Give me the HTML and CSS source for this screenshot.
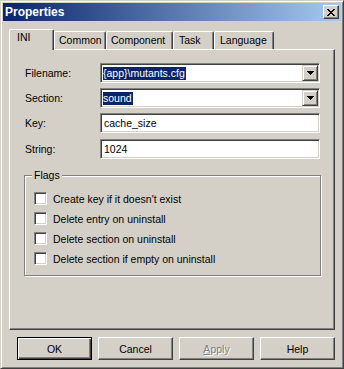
FILE: index.html
```html
<!DOCTYPE html>
<html lang="en">
<head>
    <meta charset="UTF-8">
    <title>Properties</title>
    <link rel="stylesheet" href="styles.css">
</head>
<body>
    <div class="window">
        <div class="titlebar">
            <span class="title">Properties</span>
            <div class="close">
                <svg width="8" height="7" viewBox="0 0 8 7" shape-rendering="crispEdges">
                    <path fill="#000" d="M0 0h2v1H0zM6 0h2v1H6zM1 1h2v1H1zM5 1h2v1H5zM2 2h4v1H2zM3 3h2v1H3zM2 4h4v1H2zM1 5h2v1H1zM5 5h2v1H5zM0 6h2v1H0zM6 6h2v1H6z"/>
                </svg>
            </div>
        </div>
        <div class="content">
            <div class="tabs">
                <div class="tab active tab-ini">INI</div>
                <div class="tab tab-common">Common</div>
                <div class="tab tab-component">Component</div>
                <div class="tab tab-task">Task</div>
                <div class="tab tab-language">Language</div>
            </div>
            <div class="panel">
                <div class="fields">
                    <label>Filename:</label>
                    <div class="field combo">
                        <span class="value"><span class="selected">{app}\mutants.cfg</span></span>
                        <span class="drop">
                            <svg width="7" height="4" viewBox="0 0 7 4" shape-rendering="crispEdges">
                                <path fill="#000" d="M0 0h7v1H0zM1 1h5v1H1zM2 2h3v1H2zM3 3h1v1H3z"/>
                            </svg>
                        </span>
                    </div>
                    <label>Section:</label>
                    <div class="field combo">
                        <span class="value"><span class="selected">sound</span></span>
                        <span class="drop">
                            <svg width="7" height="4" viewBox="0 0 7 4" shape-rendering="crispEdges">
                                <path fill="#000" d="M0 0h7v1H0zM1 1h5v1H1zM2 2h3v1H2zM3 3h1v1H3z"/>
                            </svg>
                        </span>
                    </div>
                    <label>Key:</label>
                    <div class="field"><span class="value">cache_size</span></div>
                    <label>String:</label>
                    <div class="field last"><span class="value">1024</span></div>
                </div>
                <fieldset class="flags">
                    <legend>Flags</legend>
                    <div class="check"><span class="box"></span>Create key if it doesn't exist</div>
                    <div class="check"><span class="box"></span>Delete entry on uninstall</div>
                    <div class="check"><span class="box"></span>Delete section on uninstall</div>
                    <div class="check"><span class="box"></span>Delete section if empty on uninstall</div>
                </fieldset>
            </div>
            <div class="buttons">
                <button class="default">OK</button>
                <button>Cancel</button>
                <button class="disabled"><u>A</u>pply</button>
                <button>Help</button>
            </div>
        </div>
    </div>
</body>
</html>
```

FILE: styles.css
```css
body {
    margin: 0;
    font-family: "Liberation Sans", Arial, sans-serif;
    font-size: 10.5px;
    color: #000;
}
.window {
    width: 344px;
    height: 369px;
    box-sizing: border-box;
    background: #d4d0c8;
    border: 1px solid;
    border-color: #d4d0c8 #404040 #404040 #d4d0c8;
    box-shadow: inset 1px 1px #fff, inset -1px -1px #808080;
    padding: 2px;
    display: flex;
    flex-direction: column;
}
.titlebar {
    height: 18px;
    display: flex;
    align-items: center;
    justify-content: space-between;
    padding: 0 2px;
    background: linear-gradient(to right, #0a246a, #a6caf0);
}
.title {
    color: #fff;
    font-weight: bold;
    font-size: 12px;
}
.close {
    width: 16px;
    height: 14px;
    box-sizing: border-box;
    background: #d4d0c8;
    border: 1px solid;
    border-color: #fff #404040 #404040 #fff;
    box-shadow: inset -1px -1px #808080;
    display: flex;
    align-items: center;
    justify-content: center;
}
.content {
    flex: 1;
    padding: 8px 6px 0;
    display: flex;
    flex-direction: column;
}

/* tabs */
.tabs {
    display: flex;
    align-items: flex-end;
    height: 20px;
}
.tab {
    height: 18px;
    box-sizing: border-box;
    padding: 2px 0 0 4px;
    border-top: 1px solid #fff;
    border-left: 1px solid #fff;
    border-right: 1px solid #404040;
    border-radius: 2px 2px 0 0;
    box-shadow: inset -1px 0 #808080;
    white-space: nowrap;
}
.tab.active {
    height: 21px;
    margin-bottom: -1px;
    padding: 1px 0 0 7px;
    background: #d4d0c8;
    position: relative;
    z-index: 1;
}
.tab-ini { width: 45px; }
.tab-common { width: 52px; }
.tab-component { width: 67px; }
.tab-task { width: 41px; padding-left: 5px; }
.tab-language { width: 60px; padding-left: 5px; }

.panel {
    height: 281px;
    box-sizing: border-box;
    border: 1px solid;
    border-color: #fff #404040 #404040 #fff;
    box-shadow: inset -1px -1px #808080;
    padding: 13px 13px 0 14px;
}

/* fields */
.fields {
    display: grid;
    grid-template-columns: 75px 220px;
    row-gap: 5px;
    align-items: center;
    padding-left: 1px;
}
.field {
    height: 20px;
    box-sizing: border-box;
    background: #fff;
    border: 1px solid;
    border-color: #808080 #fff #fff #808080;
    box-shadow: inset 1px 1px #404040, inset -1px -1px #d4d0c8;
    padding: 1px;
    display: flex;
    align-items: center;
}
.field.last {
    margin-top: 1px;
}
.value {
    flex: 1;
    padding-left: 2px;
    line-height: 13px;
}
.selected {
    display: inline-block;
    background: #0a246a;
    color: #fff;
    padding: 0 1px 0 0;
    margin-left: -1px;
}
.drop {
    width: 16px;
    height: 16px;
    box-sizing: border-box;
    background: #d4d0c8;
    border: 1px solid;
    border-color: #d4d0c8 #404040 #404040 #d4d0c8;
    box-shadow: inset 1px 1px #fff, inset -1px -1px #808080;
    display: flex;
    align-items: center;
    justify-content: center;
}

/* flags group */
.flags {
    margin: 10px 0 0;
    padding: 10px 0 10px 9px;
    border: 1px solid #808080;
    box-shadow: inset 1px 1px #fff, 1px 1px #fff;
    display: flex;
    flex-direction: column;
    gap: 7px;
}
.flags legend {
    padding: 0 2px;
    margin-left: -2px;
    line-height: 13px;
    background: #d4d0c8;
}
.check {
    display: flex;
    align-items: center;
    gap: 6px;
    height: 13px;
}
.box {
    width: 13px;
    height: 13px;
    box-sizing: border-box;
    background: #fff;
    border: 1px solid;
    border-color: #808080 #fff #fff #808080;
    box-shadow: inset 1px 1px #404040, inset -1px -1px #d4d0c8;
}

/* buttons */
.buttons {
    display: flex;
    justify-content: flex-end;
    gap: 6px;
    margin-top: 7px;
}
button {
    width: 75px;
    height: 23px;
    padding: 0;
    font: inherit;
    color: #000;
    background: #d4d0c8;
    border: 1px solid;
    border-color: #fff #404040 #404040 #fff;
    box-shadow: inset -1px -1px #808080;
}
button.default {
    border-color: #000;
    box-shadow: inset 1px 1px #fff, inset -1px -1px #404040, inset -2px -2px #808080;
}
button.disabled {
    color: #808080;
    text-shadow: 1px 1px #fff;
}
```
